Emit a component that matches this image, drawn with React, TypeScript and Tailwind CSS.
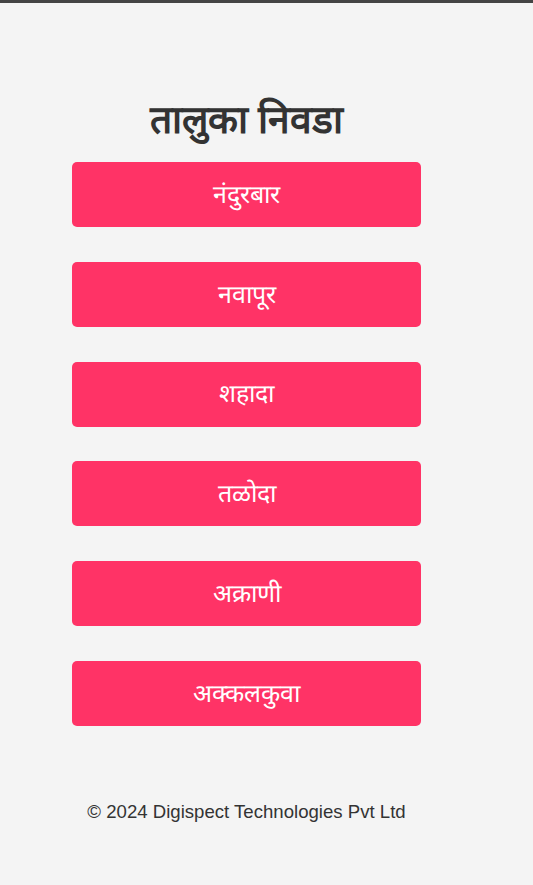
export default function App() {
  const items = ["नंदुरबार", "नवापूर", "शहादा", "तळोदा", "अक्राणी", "अक्कलकुवा"];
  return (
    <div className="min-h-[885px] bg-[#f4f4f4] border-t-[3px] border-[#444444]" style={{ fontFamily: '"Liberation Sans", Arial, sans-serif' }}>
      <div className="ml-[72px] w-[349px] flex flex-col pt-[90px]">
        <h1 className="text-center text-[39px] font-bold text-[#333333] leading-[54px]">तालुका निवडा</h1>
        <div className="mt-[15px] flex flex-col gap-[34.8px]">
          {items.map((t) => (
            <button key={t} className="h-[65px] w-full rounded-[5px] bg-[#ff3366] text-white text-[25px]">
              {t}
            </button>
          ))}
        </div>
        <p className="mt-[74px] text-center text-[18.6px] text-[#333333] leading-[24px]">© 2024 Digispect Technologies Pvt Ltd</p>
      </div>
    </div>
  );
}
